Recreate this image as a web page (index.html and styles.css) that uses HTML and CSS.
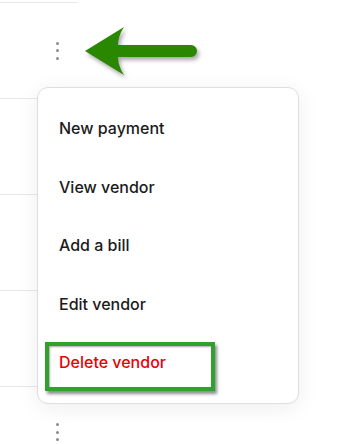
FILE: index.html
```html
<!DOCTYPE html>
<html>
<head>
<meta charset="utf-8">
<link rel="stylesheet" href="styles.css">
</head>
<body>
<div class="page">
  <div class="rows">
    <div class="row"><span class="kebab"><i></i><i></i><i></i></span></div>
    <div class="row"></div>
    <div class="row"></div>
    <div class="row"></div>
    <div class="row last"><span class="kebab"><i></i><i></i><i></i></span></div>
  </div>

  <svg class="arrow" width="125" height="60" viewBox="0 0 125 60" aria-hidden="true">
    <path d="M5 29 L44 5 Q38 14 38 23 L111 23 A6 6 0 0 1 111 35 L38 35 Q38 44 44 53 Z" fill="#2a8800"/>
  </svg>

  <div class="menu">
    <div class="item">New payment</div>
    <div class="item">View vendor</div>
    <div class="item">Add a bill</div>
    <div class="item">Edit vendor</div>
    <div class="item danger">Delete vendor</div>
  </div>

  <div class="highlight"></div>
</div>
</body>
</html>
```

FILE: styles.css
```css
html, body {
  margin: 0;
  padding: 0;
  background: #ffffff;
}
body {
  width: 338px;
  height: 444px;
  overflow: hidden;
  font-family: Inter, "Noto Sans", "Liberation Sans", sans-serif;
}
.page {
  position: relative;
  width: 338px;
  height: 444px;
  overflow: hidden;
}
.rows {
  display: flex;
  flex-direction: column;
  width: 78px;
  padding-top: 2px;
}
.row {
  box-sizing: border-box;
  height: 96px;
  border-top: 1px solid #e8e8e8;
  display: flex;
  align-items: center;
  justify-content: flex-end;
  padding-right: 19px;
  flex-shrink: 0;
}
.row.last {
  height: 58px;
  align-items: flex-end;
  padding-bottom: 3px;
}
.kebab {
  display: flex;
  flex-direction: column;
  gap: 4.5px;
}
.kebab i {
  display: block;
  width: 3px;
  height: 3px;
  border-radius: 50%;
  background: #8c8c8c;
}
.arrow {
  position: absolute;
  left: 80px;
  top: 22px;
  filter: drop-shadow(2px 3px 2px rgba(0, 0, 0, 0.35));
}
.menu {
  position: absolute;
  left: 37px;
  top: 87px;
  width: 260px;
  border: 1px solid #dedede;
  border-radius: 11px;
  background: #fff;
  box-shadow: 0 4px 22px rgba(0, 0, 0, 0.07);
  padding: 11px 0 11px;
  display: flex;
  flex-direction: column;
}
.item {
  height: 58.5px;
  display: flex;
  align-items: center;
  padding-left: 21px;
  font-size: 16px;
  font-weight: 500;
  color: #1b1b1b;
}
.item.danger {
  color: #e8000b;
}
.highlight {
  position: absolute;
  left: 45px;
  top: 342px;
  width: 162px;
  height: 41px;
  border: 4px solid #2fa12c;
  box-shadow: 2px 3px 3px rgba(0, 0, 0, 0.45), inset 1px 1px 2px rgba(0, 0, 0, 0.35);
}
```
